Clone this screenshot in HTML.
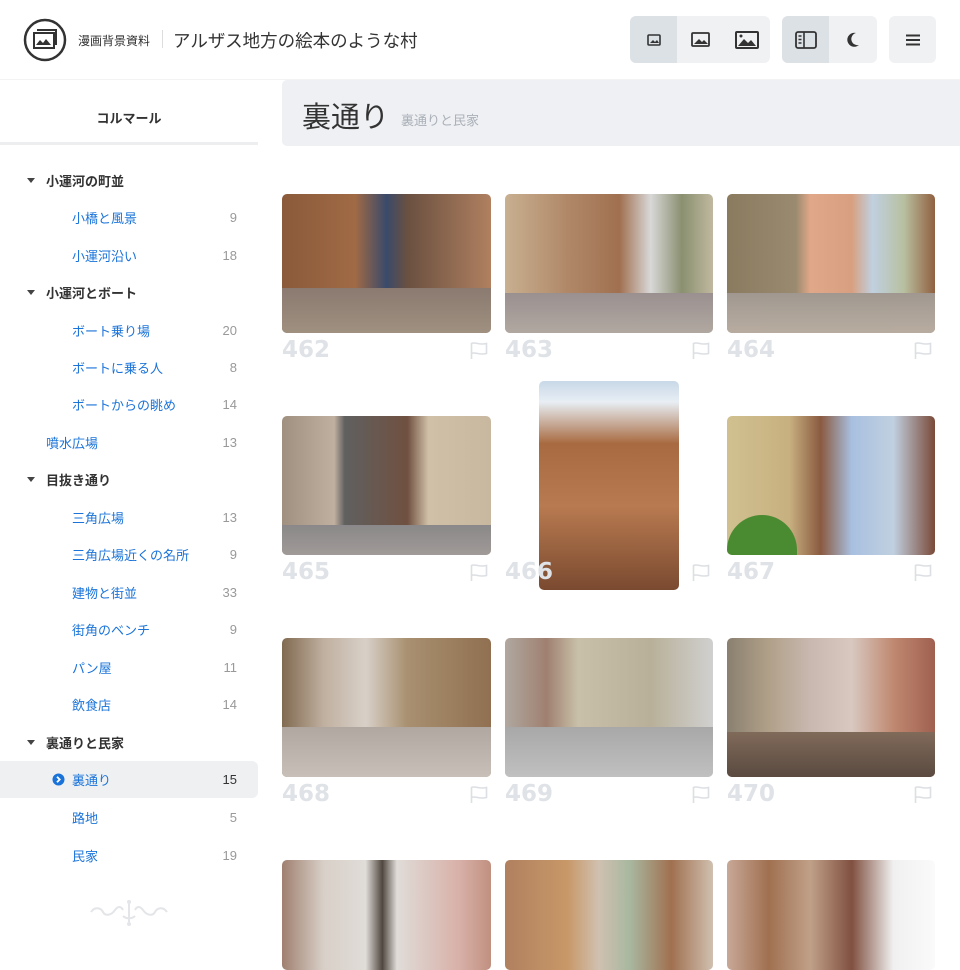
<!DOCTYPE html>
<html><head><meta charset="utf-8"><style>
*{margin:0;padding:0;box-sizing:border-box}
body{width:960px;height:960px;overflow:hidden;background:#fff;font-family:"Liberation Sans","Noto Sans CJK JP",sans-serif;position:relative;color:#333}
.a{position:absolute}
.btn{position:absolute;top:16px;height:47px;background:#f0f1f3;border-radius:6px;overflow:hidden}
.btn .s{position:absolute;top:0;height:47px;display:flex;align-items:center;justify-content:center}
.act{background:#dce1e6}
.row{position:absolute;left:0;width:258px;height:36px;display:flex;align-items:center;font-size:13px}
.cat{font-weight:bold;color:#333;padding-left:46px}
.cat:before{content:"";position:absolute;left:27px;top:16px;border-left:4px solid transparent;border-right:4px solid transparent;border-top:5px solid #444}
.sub{color:#1a73d9;padding-left:72px}
.top{color:#1a73d9;padding-left:46px}
.n{position:absolute;right:21px;color:#999;font-size:13px}
.ph{position:absolute;width:209px;height:139px;border-radius:5px;overflow:hidden}
.num{position:absolute;font-size:23px;font-weight:bold;color:#dfe2e6;font-family:"DejaVu Sans","Liberation Sans",sans-serif}
.fl{position:absolute;width:18px;height:17px}
</style></head><body>
<svg class="a" style="left:23px;top:18px" width="44" height="44" viewBox="0 0 44 44"><circle cx="22" cy="22" r="20" fill="none" stroke="#333" stroke-width="2.5"/><rect x="11" y="15" width="20" height="15" fill="none" stroke="#333" stroke-width="2"/><path d="M14 12h19v15" fill="none" stroke="#333" stroke-width="2"/><path d="M13 27l4-5 3 3 3-4 5 6z" fill="#333"/></svg>
<div class="a" style="left:78px;top:32px;font-size:12px;color:#333">漫画背景資料</div>
<div class="a" style="left:162px;top:30px;width:1px;height:18px;background:#ddd"></div>
<div class="a" style="left:173px;top:28px;font-size:17.5px;color:#333">アルザス地方の絵本のような村</div>
<div class="btn" style="left:630px;width:140px"><div class="s act" style="left:0;width:47px"><svg width="14" height="12" viewBox="0 0 14 12"><rect x="1" y="1" width="12" height="10" rx="1" fill="none" stroke="#333" stroke-width="1.6"/><path d="M3 9l3-3 2 2 2-2 2 3z" fill="#333"/></svg></div><div class="s" style="left:47px;width:46px"><svg width="19" height="15" viewBox="0 0 19 15"><rect x="1" y="1" width="17" height="13" rx="1" fill="none" stroke="#333" stroke-width="1.8"/><path d="M3 12l5-5 3 3 2-2 4 4z" fill="#333"/></svg></div><div class="s" style="left:93px;width:47px"><svg width="24" height="18" viewBox="0 0 24 18"><rect x="1" y="1" width="22" height="16" rx="1" fill="none" stroke="#333" stroke-width="2"/><path d="M3 15l6-7 4 4 3-3 5 6z" fill="#333"/><circle cx="6" cy="5" r="1.5" fill="#333"/></svg></div></div>
<div class="btn" style="left:782px;width:95px"><div class="s act" style="left:0;width:47px"><svg width="22" height="18" viewBox="0 0 22 18"><rect x="1" y="1" width="20" height="16" rx="2" fill="none" stroke="#333" stroke-width="1.8"/><path d="M9 1v16M3.5 5h3M3.5 8.5h3M3.5 12h3" stroke="#333" stroke-width="1.6"/></svg></div><div class="s" style="left:47px;width:48px"><svg width="14" height="16" viewBox="0 0 14 16"><path d="M10 1A7 7 0 1 0 13 13 6 6 0 0 1 10 1z" fill="#333"/></svg></div></div>
<div class="btn" style="left:889px;width:47px"><div class="s" style="left:0;width:47px"><svg width="14" height="12" viewBox="0 0 14 12"><path d="M0 1.5h14M0 6h14M0 10.5h14" stroke="#333" stroke-width="2"/></svg></div></div>
<div class="a" style="left:0;top:79px;width:960px;height:1px;background:#f3f3f3"></div>
<div class="a" style="left:0;top:108px;width:258px;text-align:center;font-size:13px;font-weight:bold;color:#333">コルマール</div>
<div class="a" style="left:0;top:142px;width:258px;height:3px;background:#eceef0"></div>
<div class="row cat" style="top:162px">小運河の町並</div>
<div class="row sub" style="top:199px">小橋と風景<span class="n">9</span></div>
<div class="row sub" style="top:237px">小運河沿い<span class="n">18</span></div>
<div class="row cat" style="top:274px">小運河とボート</div>
<div class="row sub" style="top:312px">ボート乗り場<span class="n">20</span></div>
<div class="row sub" style="top:349px">ボートに乗る人<span class="n">8</span></div>
<div class="row sub" style="top:386px">ボートからの眺め<span class="n">14</span></div>
<div class="row top" style="top:424px">噴水広場<span class="n">13</span></div>
<div class="row cat" style="top:461px">目抜き通り</div>
<div class="row sub" style="top:499px">三角広場<span class="n">13</span></div>
<div class="row sub" style="top:536px">三角広場近くの名所<span class="n">9</span></div>
<div class="row sub" style="top:574px">建物と街並<span class="n">33</span></div>
<div class="row sub" style="top:611px">街角のベンチ<span class="n">9</span></div>
<div class="row sub" style="top:649px">パン屋<span class="n">11</span></div>
<div class="row sub" style="top:686px">飲食店<span class="n">14</span></div>
<div class="row cat" style="top:724px">裏通りと民家</div>
<div class="row sub" style="top:761px;background:#eff0f2;border-radius:0 6px 6px 0;height:37px">裏通り<span class="n" style="color:#333">15</span></div>
<svg class="a" style="left:52px;top:773px" width="13" height="13" viewBox="0 0 13 13"><circle cx="6.5" cy="6.5" r="6" fill="#1a73d9"/><path d="M5 3.8l2.7 2.7L5 9.2" fill="none" stroke="#fff" stroke-width="1.8"/></svg>
<div class="row sub" style="top:799px">路地<span class="n">5</span></div>
<div class="row sub" style="top:837px">民家<span class="n">19</span></div>
<svg class="a" style="left:88px;top:898px" width="82" height="30" viewBox="0 0 82 30"><g fill="none" stroke="#e3e5e8" stroke-width="2"><path d="M3 14c4-6 10-4 12 0s8 4 12-2c3-4 6-4 8 0M79 14c-4-6-10-4-12 0s-8 4-12-2c-3-4-6-4-8 0"/><path d="M41 6v18M35 18c3 3 9 3 12 0"/></g><circle cx="41" cy="4" r="2" fill="#e3e5e8"/><circle cx="41" cy="26" r="2" fill="#e3e5e8"/></svg>
<div class="a" style="left:282px;top:80px;width:690px;height:66px;background:#eff0f3;border-radius:5px"></div>
<div class="a" style="left:302px;top:94px;font-size:29px;color:#333">裏通り</div>
<div class="a" style="left:401px;top:110px;font-size:13px;color:#aab0b8">裏通りと民家</div>
<div class="ph" style="left:282px;top:194px;background:linear-gradient(90deg,#8a5a3a 0,#a06a45 35%,#3a4a6a 50%,#6a5040 60%,#b08060 100%)"><div style="position:absolute;bottom:0;width:100%;height:45px;background:linear-gradient(#8a7a70,#a09080)"></div></div>
<div class="ph" style="left:505px;top:194px;width:208px;background:linear-gradient(90deg,#c8b090 0,#b08868 30%,#a07050 55%,#d8d8d8 70%,#8a9070 85%,#c0b8a0 100%)"><div style="position:absolute;bottom:0;width:100%;height:40px;background:linear-gradient(#9a9090,#b0a8a0)"></div></div>
<div class="ph" style="left:727px;top:194px;width:208px;background:linear-gradient(90deg,#8a7a5e 0,#9a8a70 33%,#e0a888 40%,#d8a080 60%,#c0d0e0 70%,#b8c0a0 85%,#906040 100%)"><div style="position:absolute;bottom:0;width:100%;height:40px;background:linear-gradient(#a09890,#b8aca0)"></div></div>
<div class="ph" style="left:282px;top:416px;background:linear-gradient(90deg,#a09080 0,#c0b0a0 25%,#606060 30%,#705040 60%,#d0c0a8 70%,#c8b8a0 100%)"><div style="position:absolute;bottom:0;width:100%;height:30px;background:linear-gradient(#8a8888,#a09a98)"></div></div>
<div class="ph" style="left:539px;top:381px;width:140px;height:209px;background:linear-gradient(#c8d8e8 0,#e8eef4 10%,#a86a40 30%,#b87a50 60%,#7a4a30 100%)"></div>
<div class="ph" style="left:727px;top:416px;width:208px;background:linear-gradient(90deg,#d0c090 0,#c8b080 30%,#8a5a40 45%,#a8c0e0 60%,#c0d0e0 80%,#7a4a38 100%)"><div style="position:absolute;bottom:0;left:0;width:70px;height:40px;background:#4a8a30;border-radius:40px 40px 0 0"></div></div>
<div class="ph" style="left:282px;top:638px;background:linear-gradient(90deg,#806a50 0,#c0b0a0 20%,#d8d0c8 40%,#a89070 60%,#907050 100%)"><div style="position:absolute;bottom:0;width:100%;height:50px;background:linear-gradient(#b0a8a0,#c8c0b8)"></div></div>
<div class="ph" style="left:505px;top:638px;width:208px;background:linear-gradient(90deg,#b0a8a0 0,#a08070 20%,#c8c0a8 35%,#b8b098 70%,#d0d0d0 100%)"><div style="position:absolute;bottom:0;width:100%;height:50px;background:linear-gradient(#a8a8a8,#c0c0c0)"></div></div>
<div class="ph" style="left:727px;top:638px;width:208px;background:linear-gradient(90deg,#8a8070 0,#b0a088 20%,#c8b8b0 40%,#d8c8c0 60%,#c08870 80%,#a06050 100%)"><div style="position:absolute;bottom:0;width:100%;height:45px;background:linear-gradient(#806a5a,#5a4a40)"></div></div>
<div class="ph" style="left:282px;top:860px;height:110px;background:linear-gradient(90deg,#a08070 0,#d8d0c8 20%,#e0dcd8 40%,#504840 48%,#e0dcd8 55%,#d8b0a8 85%,#c09080 100%)"></div>
<div class="ph" style="left:505px;top:860px;width:208px;height:110px;background:linear-gradient(90deg,#b08060 0,#c89868 30%,#d0c0b0 45%,#a8b8a0 60%,#a07050 80%,#d0c0b0 100%)"></div>
<div class="ph" style="left:727px;top:860px;width:208px;height:110px;background:linear-gradient(90deg,#c8a898 0,#a07050 20%,#c0a088 40%,#805040 60%,#f0f0f0 80%,#fafafa 100%)"></div>
<div class="num" style="left:282px;top:337px">462</div>
<div class="num" style="left:505px;top:337px">463</div>
<div class="num" style="left:727px;top:337px">464</div>
<div class="num" style="left:282px;top:559px">465</div>
<div class="num" style="left:505px;top:559px">466</div>
<div class="num" style="left:727px;top:559px">467</div>
<div class="num" style="left:282px;top:781px">468</div>
<div class="num" style="left:505px;top:781px">469</div>
<div class="num" style="left:727px;top:781px">470</div>
<svg width="0" height="0" style="position:absolute"><defs><g id="f"><path d="M1.5 17V1.5c4-2 7 2 15 0v10c-8 2-11-2-15 0" fill="none" stroke="#dcdfe3" stroke-width="1.6"/></g></defs></svg>
<svg class="fl" style="left:470px;top:342px"><use href="#f"/></svg>
<svg class="fl" style="left:692px;top:342px"><use href="#f"/></svg>
<svg class="fl" style="left:914px;top:342px"><use href="#f"/></svg>
<svg class="fl" style="left:470px;top:564px"><use href="#f"/></svg>
<svg class="fl" style="left:692px;top:564px"><use href="#f"/></svg>
<svg class="fl" style="left:914px;top:564px"><use href="#f"/></svg>
<svg class="fl" style="left:470px;top:786px"><use href="#f"/></svg>
<svg class="fl" style="left:692px;top:786px"><use href="#f"/></svg>
<svg class="fl" style="left:914px;top:786px"><use href="#f"/></svg>
</body></html>
